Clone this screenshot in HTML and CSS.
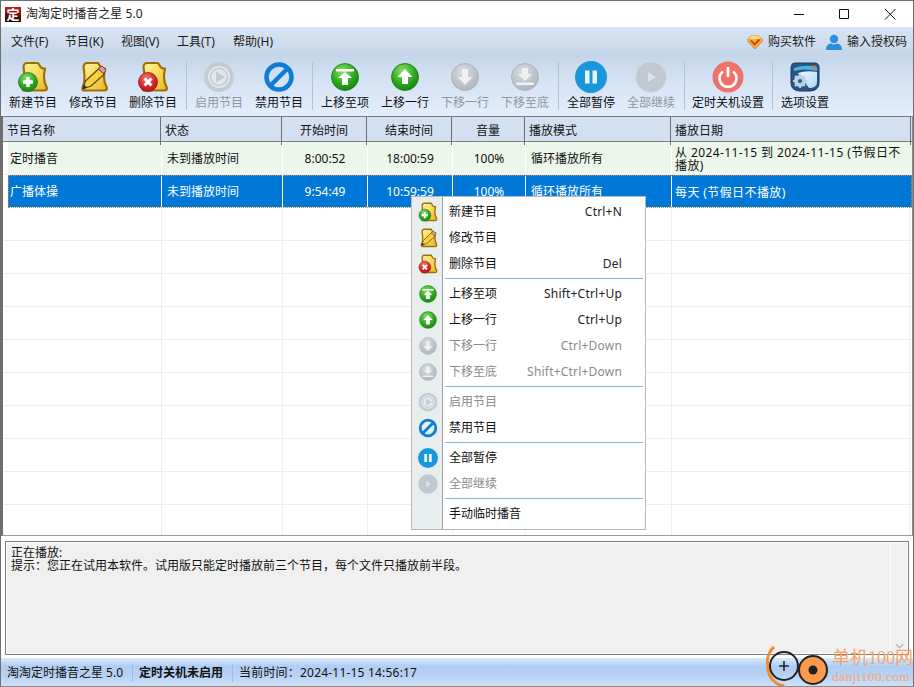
FILE: index.html
```html
<!DOCTYPE html>
<html lang="zh-CN">
<head>
<meta charset="utf-8">
<title>淘淘定时播音之星 5.0</title>
<link rel="stylesheet" href="styles.css">
</head>
<body>
<svg class="defs" aria-hidden="true">
  <defs>
    <linearGradient id="gold" x1="0" y1="0" x2="1" y2="1"><stop offset="0" stop-color="#fff3a0"/><stop offset=".5" stop-color="#f7d95a"/><stop offset="1" stop-color="#e5b62a"/></linearGradient>
    <radialGradient id="green" cx=".42" cy=".3" r=".8"><stop offset="0" stop-color="#8fe36a"/><stop offset=".55" stop-color="#2fa81e"/><stop offset="1" stop-color="#0f7a10"/></radialGradient>
    <radialGradient id="red" cx=".42" cy=".3" r=".8"><stop offset="0" stop-color="#f47a70"/><stop offset=".55" stop-color="#d7282a"/><stop offset="1" stop-color="#a31416"/></radialGradient>
    <radialGradient id="grey" cx=".42" cy=".3" r=".8"><stop offset="0" stop-color="#d8dce2"/><stop offset="1" stop-color="#aab0ba"/></radialGradient>
    <linearGradient id="glass" x1="0" y1="0" x2="1" y2="1"><stop offset="0" stop-color="#f4fbff"/><stop offset="1" stop-color="#a8d6f2"/></linearGradient>
    <path id="doc" d="M10 2H21L23 5Q24 8 28 7.500Q27 13 27 16Q27 22 30 27Q30 29.500 27 29.500H8Q5 29.500 5.500 27Q8 21 7.500 15Q7 9 6.500 6Q7 2 10 2Z" fill="url(#gold)" stroke="#a06f0a" stroke-width="2.200" stroke-linejoin="round"/>
    <symbol id="i-new" viewBox="0 0 32 32"><use href="#doc"/><circle cx="11" cy="21" r="9.500" fill="url(#green)" stroke="#1c7d1c" stroke-width=".8"/><path d="M11 16v10M6 21h10" stroke="#fff" stroke-width="3.400"/></symbol>
    <symbol id="i-edit" viewBox="0 0 32 32"><use href="#doc"/><path d="M5.500 28L8.500 20 22 7.500 27.500 13 14 25Z" fill="#f8cf3c" stroke="#5d4a12" stroke-width="1.200" stroke-linejoin="round"/><path d="M21.500 8L24 5.500Q25 4.800 26 5.800L28.500 8.500Q29.200 9.500 28.200 10.500L26 12.500Z" fill="#f08fb0" stroke="#5d4a12"/><path d="M5.500 28L7 23.500 10.500 26.800Z" fill="#333"/></symbol>
    <symbol id="i-del" viewBox="0 0 32 32"><use href="#doc"/><circle cx="11" cy="21" r="9.500" fill="url(#red)" stroke="#8e1717" stroke-width=".8"/><path d="M7.500 17.500l7 7M14.500 17.500l-7 7" stroke="#fff" stroke-width="3"/></symbol>
    <symbol id="i-play" viewBox="0 0 32 32"><circle cx="16" cy="16" r="13" fill="#e3e8ee" stroke="#c3cbd3" stroke-width="4"/><circle cx="16" cy="16" r="8.500" fill="#e3e8ee" stroke="#c3cbd3" stroke-width="1.500"/><path d="M13 10.500L22 16 13 21.500Z" fill="#c3cbd3"/></symbol>
    <symbol id="i-ban" viewBox="0 0 32 32"><circle cx="16" cy="16" r="12.500" fill="none" stroke="#0c7cd5" stroke-width="4.500"/><path d="M7.500 24.500L24.500 7.500" stroke="#0c7cd5" stroke-width="4.500"/></symbol>
    <symbol id="i-top" viewBox="0 0 32 32"><circle cx="16" cy="16" r="13.500" fill="url(#green)" stroke="#137b13" stroke-width=".8"/><path d="M7 8h18v2.500H7ZM16 11l7 6h-4v7h-6v-7H9Z" fill="#fff"/></symbol>
    <symbol id="i-up" viewBox="0 0 32 32"><circle cx="16" cy="16" r="13.500" fill="url(#green)" stroke="#137b13" stroke-width=".8"/><path d="M16 8l7.500 8H19v7h-6v-7H8.500Z" fill="#fff"/></symbol>
    <symbol id="i-down" viewBox="0 0 32 32"><circle cx="16" cy="16" r="13.500" fill="url(#grey)" stroke="#a6acb6" stroke-width=".8"/><path d="M13 8h6v8h4.500L16 24 8.500 16H13Z" fill="#eef0f3"/></symbol>
    <symbol id="i-bottom" viewBox="0 0 32 32"><circle cx="16" cy="16" r="13.500" fill="url(#grey)" stroke="#a6acb6" stroke-width=".8"/><path d="M7 21.500h18V24H7ZM13 7h6v6h4l-7 7-7-7h4Z" fill="#eef0f3"/></symbol>
    <symbol id="i-pause" viewBox="0 0 32 32"><circle cx="16" cy="16" r="16" fill="#1a96dc"/><path d="M10 9.500h4.500v13H10ZM17.500 9.500H22v13h-4.500Z" fill="#e8f3fa"/></symbol>
    <symbol id="i-cont" viewBox="0 0 32 32"><circle cx="16" cy="16" r="15.500" fill="#c0c9d2" stroke="#d6dce2"/><path d="M13 11l8 5-8 5Z" fill="#dde3e9"/></symbol>
    <symbol id="i-power" viewBox="0 0 32 32"><circle cx="16" cy="16" r="15.500" fill="#f0706a"/><path d="M11 10.500A8.500 8.500 0 1 0 21 10.500" fill="none" stroke="#fff" stroke-width="2.600"/><path d="M16 6v10" stroke="#fff" stroke-width="2.800"/></symbol>
    <symbol id="i-gear" viewBox="0 0 32 32"><path d="M6 2H26Q30 2 30 7V22Q30 29 22 30H10Q2 29 2 22V7Q2 2 6 2Z" fill="#2c5480" stroke="#1d3a5c"/><path d="M5 7Q16 3 28 6V10Q16 7 5 10Z" fill="#46b4e2"/><path d="M9 12Q18 9 28 11V21Q28 27 20 27 15 20 9 12Z" fill="url(#glass)"/><circle cx="25" cy="6" r="1.800" fill="#f0722a"/><circle cx="11" cy="20" r="4.500" fill="none" stroke="#b9d3ea" stroke-width="3"/><path d="M11 13v14M4 20h14M6 15l10 10M16 15L6 25" stroke="#b9d3ea" stroke-width="2.200"/><circle cx="11" cy="20" r="2" fill="#2c5480"/></symbol>
    <symbol id="i-gem" viewBox="0 0 16 16"><path d="M4 2H12L16 6.500 8 15 0 6.500Z" fill="#f8a93a" stroke="#d97f16" stroke-width=".8"/><path d="M4 2H12L14 5H2Z" fill="#fcdc78"/><path d="M4 6.500L7.500 10.500 12.500 5.500" fill="none" stroke="#c2410c" stroke-width="1.800"/></symbol>
    <symbol id="i-user" viewBox="0 0 16 16"><circle cx="8" cy="5" r="4.200" fill="#2b8fe0"/><path d="M0 16Q0 10 5 9.500 8 11.500 11 9.500 16 10 16 16Z" fill="#2b8fe0"/></symbol>
  </defs>
</svg>

<div class="window">
  <header class="titlebar">
    <span class="logo">定</span>
    <span class="title">淘淘定时播音之星 5.0</span>
    <div class="winctl">
      <svg viewBox="0 0 46 27" class="ctl"><path d="M19 13.500h10" stroke="#111"/></svg>
      <svg viewBox="0 0 46 27" class="ctl"><path d="M18.500 8.500h9v9h-9Z" fill="none" stroke="#111"/></svg>
      <svg viewBox="0 0 46 27" class="ctl"><path d="M18 8l10.500 10.500M28.500 8L18 18.500" stroke="#111"/></svg>
    </div>
  </header>

  <div class="chrome">
    <nav class="menubar">
      <span class="mb first-mb">文件(F)</span><span class="mb">节目(K)</span><span class="mb">视图(V)</span><span class="mb">工具(T)</span><span class="mb">帮助(H)</span>
      <div class="links">
        <svg class="link-icon"><use href="#i-gem"/></svg><span class="link-text">购买软件</span>
        <svg class="link-icon user"><use href="#i-user"/></svg><span>输入授权码</span>
      </div>
    </nav>
    <div class="toolbar">
      <div class="tool"><svg class="ti"><use href="#i-new"/></svg>新建节目</div>
      <div class="tool"><svg class="ti"><use href="#i-edit"/></svg>修改节目</div>
      <div class="tool"><svg class="ti"><use href="#i-del"/></svg>删除节目</div>
      <i class="sep"></i>
      <div class="tool off"><svg class="ti"><use href="#i-play"/></svg>启用节目</div>
      <div class="tool"><svg class="ti"><use href="#i-ban"/></svg>禁用节目</div>
      <i class="sep"></i>
      <div class="tool"><svg class="ti"><use href="#i-top"/></svg>上移至项</div>
      <div class="tool"><svg class="ti"><use href="#i-up"/></svg>上移一行</div>
      <div class="tool off"><svg class="ti"><use href="#i-down"/></svg>下移一行</div>
      <div class="tool off"><svg class="ti"><use href="#i-bottom"/></svg>下移至底</div>
      <i class="sep"></i>
      <div class="tool"><svg class="ti"><use href="#i-pause"/></svg>全部暂停</div>
      <div class="tool off"><svg class="ti"><use href="#i-cont"/></svg>全部继续</div>
      <i class="sep"></i>
      <div class="tool wide"><svg class="ti"><use href="#i-power"/></svg>定时关机设置</div>
      <i class="sep"></i>
      <div class="tool"><svg class="ti"><use href="#i-gear"/></svg>选项设置</div>
    </div>
  </div>

  <section class="list">
    <div class="thead">
      <div class="th left">节目名称</div><div class="th left">状态</div><div class="th">开始时间</div><div class="th">结束时间</div><div class="th">音量</div><div class="th left">播放模式</div><div class="th left">播放日期</div>
    </div>
    <div class="tbody">
      <div class="row green">
        <div class="td left">定时播音</div><div class="td left">未到播放时间</div><div class="td">8:00:52</div><div class="td">18:00:59</div><div class="td">100%</div><div class="td left">循环播放所有</div><div class="td left date">从 2024-11-15 到 2024-11-15 (节假日不播放)</div>
      </div>
      <div class="row sel">
        <div class="td left">广播体操</div><div class="td left">未到播放时间</div><div class="td">9:54:49</div><div class="td">10:59:59</div><div class="td">100%</div><div class="td left">循环播放所有</div><div class="td left date">每天 (节假日不播放)</div>
      </div>
      <div class="row"><div class="td"></div><div class="td"></div><div class="td"></div><div class="td"></div><div class="td"></div><div class="td"></div><div class="td"></div></div>
      <div class="row"><div class="td"></div><div class="td"></div><div class="td"></div><div class="td"></div><div class="td"></div><div class="td"></div><div class="td"></div></div>
      <div class="row"><div class="td"></div><div class="td"></div><div class="td"></div><div class="td"></div><div class="td"></div><div class="td"></div><div class="td"></div></div>
      <div class="row"><div class="td"></div><div class="td"></div><div class="td"></div><div class="td"></div><div class="td"></div><div class="td"></div><div class="td"></div></div>
      <div class="row"><div class="td"></div><div class="td"></div><div class="td"></div><div class="td"></div><div class="td"></div><div class="td"></div><div class="td"></div></div>
      <div class="row"><div class="td"></div><div class="td"></div><div class="td"></div><div class="td"></div><div class="td"></div><div class="td"></div><div class="td"></div></div>
      <div class="row"><div class="td"></div><div class="td"></div><div class="td"></div><div class="td"></div><div class="td"></div><div class="td"></div><div class="td"></div></div>
      <div class="row"><div class="td"></div><div class="td"></div><div class="td"></div><div class="td"></div><div class="td"></div><div class="td"></div><div class="td"></div></div>
      <div class="row"><div class="td"></div><div class="td"></div><div class="td"></div><div class="td"></div><div class="td"></div><div class="td"></div><div class="td"></div></div>
      <div class="row"><div class="td"></div><div class="td"></div><div class="td"></div><div class="td"></div><div class="td"></div><div class="td"></div><div class="td"></div></div>
    </div>
  </section>

  <section class="info">
    <div class="info-text"><div class="info-line">正在播放:</div><div class="info-line">提示：您正在试用本软件。试用版只能定时播放前三个节目，每个文件只播放前半段。</div></div>
    <div class="scroll"><svg class="chev" viewBox="0 0 10 6"><path d="M1 1l4 4 4-4" fill="none" stroke="#b5b5b5" stroke-width="1.500"/></svg></div>
  </section>

  <footer class="status">
    <span class="cell first">淘淘定时播音之星 5.0</span>
    <span class="cell second">定时关机未启用</span>
    <span class="cell third">当前时间：2024-11-15 14:56:17</span>
  </footer>

  <div class="menu">
    <div class="mi"><svg class="mic"><use href="#i-new"/></svg><span class="ml">新建节目</span><span class="ms">Ctrl+N</span></div>
    <div class="mi"><svg class="mic"><use href="#i-edit"/></svg><span class="ml">修改节目</span></div>
    <div class="mi"><svg class="mic"><use href="#i-del"/></svg><span class="ml">删除节目</span><span class="ms">Del</span></div>
    <div class="msep"></div>
    <div class="mi"><svg class="mic"><use href="#i-top"/></svg><span class="ml">上移至项</span><span class="ms">Shift+Ctrl+Up</span></div>
    <div class="mi"><svg class="mic"><use href="#i-up"/></svg><span class="ml">上移一行</span><span class="ms">Ctrl+Up</span></div>
    <div class="mi off"><svg class="mic"><use href="#i-down"/></svg><span class="ml">下移一行</span><span class="ms">Ctrl+Down</span></div>
    <div class="mi off"><svg class="mic"><use href="#i-bottom"/></svg><span class="ml">下移至底</span><span class="ms">Shift+Ctrl+Down</span></div>
    <div class="msep"></div>
    <div class="mi off"><svg class="mic"><use href="#i-play"/></svg><span class="ml">启用节目</span></div>
    <div class="mi"><svg class="mic"><use href="#i-ban"/></svg><span class="ml">禁用节目</span></div>
    <div class="msep"></div>
    <div class="mi"><svg class="mic"><use href="#i-pause"/></svg><span class="ml">全部暂停</span></div>
    <div class="mi off"><svg class="mic"><use href="#i-cont"/></svg><span class="ml">全部继续</span></div>
    <div class="msep"></div>
    <div class="mi"><span class="mic"></span><span class="ml">手动临时播音</span></div>
  </div>

  <div class="mark">
    <svg class="mark-icon" viewBox="0 0 66 44">
      <path d="M10 3A19 19 0 0 0 4 22 19 19 0 0 0 20 42" fill="none" stroke="#f58a2c" stroke-width="3"/>
      <circle cx="20" cy="22" r="14" fill="none" stroke="#222" stroke-width="2"/>
      <path d="M20 17v10M15 22h10" stroke="#222" stroke-width="1.600"/>
      <circle cx="49" cy="26" r="14" fill="#fb9a4e" stroke="#222" stroke-width="2"/>
      <circle cx="49" cy="26" r="4.500" fill="#222"/>
    </svg>
    <div class="mark-text">
      <div class="mark-a">单机100网</div>
      <div class="mark-b">danji100.com</div>
    </div>
  </div>
</div>
</body>
</html>
```
FILE: styles.css
```css
* { box-sizing: border-box; }
html, body { margin: 0; padding: 0; }
body {
  width: 914px; height: 687px; overflow: hidden;
  font: 12px/16px "Noto Sans", "Noto Sans CJK SC", sans-serif;
  color: #111;
  background: #fff;
}
.defs { position: absolute; width: 0; height: 0; }
.window {
  position: relative;
  width: 914px; height: 687px;
  border: 1px solid #6f6f6f;
  border-bottom-color: #8a8a8a;
  display: flex; flex-direction: column;
  background: #fff;
  overflow: hidden;
}
.titlebar { height: 26px; flex: none; display: flex; align-items: center; padding-left: 4px; background: #fff; }
.logo {
  width: 16px; height: 15px; margin-right: 5px;
  background: linear-gradient(#c81e14, #5a0c08 60%, #1a0805);
  color: #fff; font-size: 13px; line-height: 15px; font-weight: 700; text-align: center;
}
.title { font-size: 12px; letter-spacing: .05px; color: #222; }
.winctl { margin-left: auto; display: flex; }
.ctl { width: 46px; height: 27px; display: block; }

.chrome { flex: none; height: 89px; background: linear-gradient(#d8e4f3, #c6d6ea 32%, #d4e2f4 60%, #e4eefc); }
.menubar { height: 28px; display: flex; align-items: center; padding: 1px 0 0 10px; color: #1a1a1a; }
.mb { width: 56px; flex: none; white-space: nowrap; }
.first-mb { width: 54px; }
.links { margin-left: auto; margin-right: 6px; display: flex; align-items: center; }
.link-icon { width: 16px; height: 16px; margin-right: 5px; }
.link-icon.user { margin-right: 5px; }
.link-text { margin-right: 10px; }

.toolbar { height: 61px; display: flex; padding: 6px 0 0 2px; }
.tool { width: 60px; display: flex; flex-direction: column; align-items: center; height: 52px; line-height: 16px; white-space: nowrap; color: #111; }
.tool.wide { width: 82px; }
.tool.off { color: #8f959c; }
.ti { width: 32px; height: 32px; flex: none; margin-bottom: 2px; }
.sep { width: 6px; height: 48px; flex: none; margin-top: 1px; background: linear-gradient(#aec3dc, #aec3dc) center / 1px 100% no-repeat; }

.list { flex: none; height: 420px; border-top: 1px solid #7d7d7d; border-left: 2px solid #6f6f6f; border-bottom: 1px solid #9a9a9a; border-right: 1px solid #8a8a8a; overflow: hidden; background: #fff; }
.thead {
  height: 25px; display: grid;
  grid-template-columns: 158px 121px 85px 85px 73px 146px 240px;
  background: #d3e0f1;
  border-bottom: 1px solid #7d7d7d;
}
.th { border-right: 1px solid #6e6e6e; line-height: 28px; text-align: center; }
.th.left { text-align: left; padding-left: 4px; }
.tbody { height: 394px; overflow: hidden; }
.row {
  height: 33px; padding-left: 5px;
  display: grid;
  grid-template-columns: 154px 121px 85px 85px 73px 146px 238px;
  border-bottom: 1px solid #eeeeee;
  background-clip: content-box;
}
.td { border-right: 1px solid #eeeeee; text-align: center; line-height: 34px; }
.td.left { text-align: left; padding-left: 5px; }
.td.left:first-child { padding-left: 2px; }
.td.date { border-right: 0; padding: 0 6px 0 3px; line-height: 13px; display: flex; align-items: center; letter-spacing: .4px; }
.green { background-color: #edf6ea; }
.green .td { border-right-color: #fff; }
.sel { background-color: #0078d7; color: #fff; outline: 1px dotted #d08a4c; outline-offset: -1px; margin-left: 5px; padding-left: 0; }
.sel .td { border-right-color: #fff; }

.info { flex: none; height: 114px; margin: 5px 4px 0 4px; border: 1px solid #7d7d7d; box-shadow: inset 0 0 0 1px #fff; background: #f0f0f0; display: flex; }
.info-text { flex: 1; padding: 4px 0 0 5px; color: #111; }
.info-line { height: 13px; line-height: 13px; }
.scroll { width: 18px; border-left: 1px solid #fff; display: flex; align-items: flex-end; justify-content: center; padding-bottom: 4px; margin: 1px 0; }
.chev { width: 9px; height: 6px; display: block; }

.status {
  flex: 1; margin-top: 3px; display: flex; align-items: center;
  background: linear-gradient(#dbe9fb, #afcdf3 30%, #b6d1f4 60%, #cfe0f7);
  padding-top: 2px;
}
.cell { height: 18px; line-height: 18px; padding-left: 6px; white-space: nowrap; }
.first { width: 132px; border-right: 1px solid #9fbbdd; }
.second { width: 100px; border-right: 1px solid #9fbbdd; font-weight: 700; }
.third { padding-left: 6px; letter-spacing: .2px; }

.menu {
  position: absolute; left: 410px; top: 195px;
  width: 235px; height: 334px; padding: 2px 0 4px 0;
  border: 1px solid #b8b8b8; background: linear-gradient(90deg, #e8eeee 30px, #9aa0a0 30px, #9aa0a0 31px, #fff 31px);
  z-index: 2;
}
.mi { height: 26px; display: flex; align-items: center; padding-right: 23px; }
.mic { width: 20px; height: 20px; margin: 0 11px 0 6px; flex: none; }
.ml { flex: 1; white-space: nowrap; color: #111; }
.ms { white-space: nowrap; color: #222; letter-spacing: .2px; }
.mi.off .ml, .mi.off .ms { color: #8a8a8a; }
.msep { height: 4px; margin: 0 2px 0 33px; background: linear-gradient(#8aaedb, #8aaedb) 0 1px / 100% 1px no-repeat; }

.mark { position: absolute; left: 763px; top: 643px; display: flex; z-index: 3; pointer-events: none; }
.mark-icon { width: 66px; height: 44px; margin-right: 2px; flex: none; }
.mark-text { color: #f6a36a; font-family: "Liberation Serif", "Noto Sans CJK SC", serif; }
.mark-a { font-size: 18px; line-height: 22px; margin-top: 3px; white-space: nowrap; }
.mark-b { font-size: 13.5px; line-height: 16px; white-space: nowrap; letter-spacing: .35px; }
```
